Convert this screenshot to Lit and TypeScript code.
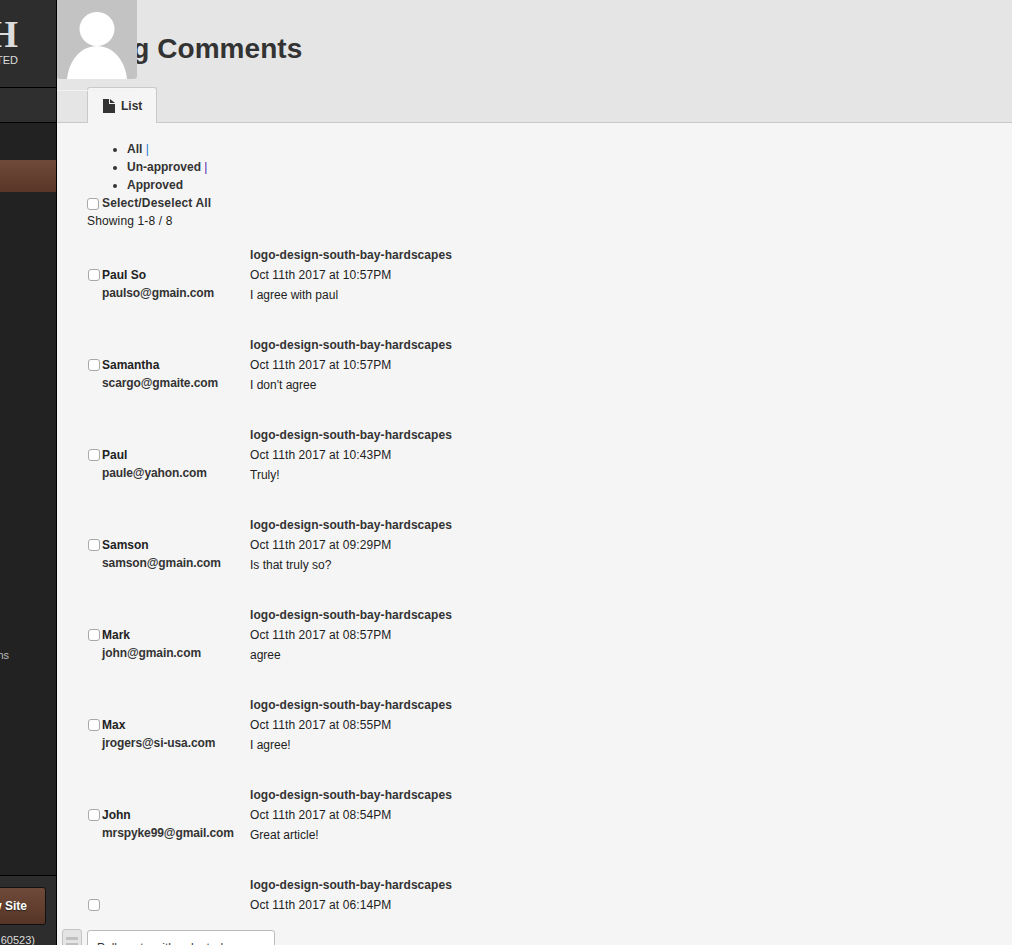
import { LitElement, html, css } from "lit";
import { customElement } from "lit/decorators.js";

const rows = [
  ["Paul So", "paulso@gmain.com", "Oct 11th 2017 at 10:57PM", "I agree with paul"],
  ["Samantha", "scargo@gmaite.com", "Oct 11th 2017 at 10:57PM", "I don't agree"],
  ["Paul", "paule@yahon.com", "Oct 11th 2017 at 10:43PM", "Truly!"],
  ["Samson", "samson@gmain.com", "Oct 11th 2017 at 09:29PM", "Is that truly so?"],
  ["Mark", "john@gmain.com", "Oct 11th 2017 at 08:57PM", "agree"],
  ["Max", "jrogers@si-usa.com", "Oct 11th 2017 at 08:55PM", "I agree!"],
  ["John", "mrspyke99@gmail.com", "Oct 11th 2017 at 08:54PM", "Great article!"],
  ["", "", "Oct 11th 2017 at 06:14PM", ""],
];

@customElement("app-root")
export class AppRoot extends LitElement {
  static styles = css`
    :host { display: block; height: 945px; overflow: hidden; font-family: "Liberation Sans", Arial, sans-serif; font-size: 12px; color: #222; background: #f5f5f5; }
    .page { display: grid; grid-template-columns: 57px 1fr; height: 945px; position: relative; }
    .side { background: #222; border-right: 1px solid #000; box-sizing: border-box; height: 945px; display: flex; flex-direction: column; overflow: hidden; color: #ccc; }
    .logo { height: 87px; flex: none; background: #2d2d2d; border-bottom: 1px solid #000; display: flex; flex-direction: column; align-items: flex-end; padding-right: 38px; box-sizing: content-box; white-space: nowrap; }
    .logo .big { font: 700 38px/38px "Liberation Serif", serif; color: #dcdcdc; margin-top: 15px; }
    .logo .small { font-size: 11px; line-height: 12px; color: #ddd; margin-top: 1px; }
    .navrow { height: 34px; flex: none; background: #2f2f2f; border-bottom: 1px solid #000; }
    .active { height: 32px; flex: none; margin-top: 37px; background: linear-gradient(#6f4a3a, #583526); }
    .ns { margin-top: 456px; height: 14px; line-height: 14px; font-size: 11px; color: #bbb; display: flex; justify-content: flex-end; padding-right: 47px; white-space: nowrap; }
    .foot { margin-top: auto; height: 69px; flex: none; background: #2d2d2d; border-top: 1px solid #000; position: relative; white-space: nowrap; }
    .btnrow { display: flex; justify-content: flex-end; padding: 11px 10px 0 0; }
    .btn { height: 38px; box-sizing: border-box; width: 80px; flex: none; border: 1px solid #111; border-radius: 3px; background: linear-gradient(#6f4a3a, #563425); color: #fff; font-weight: 700; font-size: 12px; line-height: 36px; text-align: right; padding-right: 18px; text-shadow: 0 1px 1px #222; }
    .addr { display: flex; justify-content: flex-end; padding-right: 21px; margin-top: 9px; font-size: 11px; line-height: 13px; color: #ddd; }
    main { min-width: 0; height: 945px; overflow: hidden; position: relative; }
    header { height: 122px; box-sizing: content-box; background: #e5e5e5; border-bottom: 1px solid #c9c9c9; position: relative; }
    h1 { margin: 0; padding: 31px 0 0 30px; font-size: 28px; line-height: 36px; font-weight: 700; color: #333; letter-spacing: 0.05px; }
    .avatar { position: absolute; left: 0; top: 0; width: 80px; height: 79px; background: #c3c3c3; border-radius: 0 0 3px 3px; overflow: hidden; }
    .avatar svg { display: block; filter: blur(0.6px); }
    .rule { position: absolute; left: 0; top: 90px; width: 80px; height: 1px; background: #f2f2f2; }
    .tab { position: absolute; left: 30px; top: 87px; width: 70px; height: 36px; box-sizing: border-box; background: #f5f5f5; border: 1px solid #c9c9c9; border-bottom: none; border-radius: 3px 3px 0 0; display: flex; align-items: center; gap: 6px; padding-left: 15px; font-weight: 700; color: #333; }
    .content { padding: 17px 0 0 30px; }
    ul { margin: 0; padding: 0 0 0 40px; }
    li { line-height: 18px; font-weight: 700; color: #333; }
    .sep { font-weight: 400; color: #2a78d0; }
    .sep.v { color: #5020b0; }
    .check { appearance: none; -webkit-appearance: none; margin: 0; flex: none; width: 12px; height: 12px; box-sizing: border-box; background: #fff; border: 1px solid #a8a8a8; border-radius: 3px; }
    .all { display: flex; align-items: center; gap: 3px; height: 18px; font-weight: 700; color: #333; letter-spacing: 0.16px; }
    .all .check { margin-top: 1px; }
    .count { line-height: 18px; height: 18px; letter-spacing: 0.14px; }
    .list { margin-top: 7px; }
    .row { display: grid; grid-template-columns: 163px 1fr; height: 90px; padding-top: 8px; box-sizing: border-box; }
    .who { display: grid; grid-template-columns: 15px 1fr; grid-template-rows: 18px 18px; align-content: start; padding-top: 21px; line-height: 18px; font-weight: 700; color: #333; }
    .who .check { margin: 3px 0 0 1px; }
    .who .name { color: #222; }
    .who .mail { grid-column: 2; letter-spacing: -0.1px; }
    .what { line-height: 20px; color: #222; }
    .what b { display: block; color: #333; letter-spacing: 0.06px; }
    .what div { height: 20px; }
    .what .date { letter-spacing: 0.09px; }
    .handle { position: absolute; left: 5px; top: 929px; width: 20px; height: 30px; box-sizing: border-box; background: #e4e4e4; border: 1px solid #c4c4c4; border-radius: 3px; padding: 7px 3px; display: flex; flex-direction: column; gap: 3px; }
    .handle i { display: block; height: 3px; flex: none; background: #c0c0c0; }
    .editor { position: absolute; left: 30px; top: 930px; width: 188px; height: 40px; box-sizing: border-box; background: #fff; border: 1px solid #bbb; border-radius: 3px; padding: 9px 9px; line-height: 16px; font-size: 12px; color: #333; white-space: nowrap; overflow: hidden; }
  `;

  render() {
    return html`<div class="page">
      <aside class="side">
        <div class="logo"><div class="big">H</div><div class="small">TED</div></div>
        <div class="navrow"></div>
        <div class="active"></div>
        <div class="ns">ns</div>
        <div class="foot">
          <div class="btnrow"><div class="btn">View Site</div></div>
          <div class="addr">60523)</div>
        </div>
      </aside>
      <main>
        <header>
          <h1>Blog Comments</h1>
          <div class="avatar">
            <svg width="80" height="79" viewBox="0 0 80 79"><ellipse cx="40" cy="29" rx="17.5" ry="17" fill="#fff"/><path d="M10 79C12 60 24 46 40 46s28 14 30 33z" fill="#fff"/></svg>
          </div>
          <div class="tab">
            <svg width="12" height="14" viewBox="0 0 12 14"><path d="M0 0h6v5h6v9H0z" fill="#333"/><path d="M7 0l5 4H7z" fill="#333"/></svg>
            <span>List</span>
          </div>
          <div class="rule"></div>
        </header>
        <div class="content">
          <ul>
            <li>All <span class="sep">|</span></li>
            <li>Un-approved <span class="sep v">|</span></li>
            <li>Approved</li>
          </ul>
          <label class="all"><input class="check" type="checkbox" />Select/Deselect All</label>
          <div class="count">Showing 1-8 / 8</div>
          <div class="list">
            ${rows.map(
              (r) => html`<div class="row">
                <div class="who">
                  <input class="check" type="checkbox" />
                  <span class="name">${r[0]}</span>
                  <span class="mail">${r[1]}</span>
                </div>
                <div class="what">
                  <b>logo-design-south-bay-hardscapes</b>
                  <div class="date">${r[2]}</div>
                  <div>${r[3]}</div>
                </div>
              </div>`
            )}
          </div>
        </div>
        <div class="handle"><i></i><i></i><i></i></div>
        <div class="editor">Pull quote with selected</div>
      </main>
    </div>`;
  }
}
